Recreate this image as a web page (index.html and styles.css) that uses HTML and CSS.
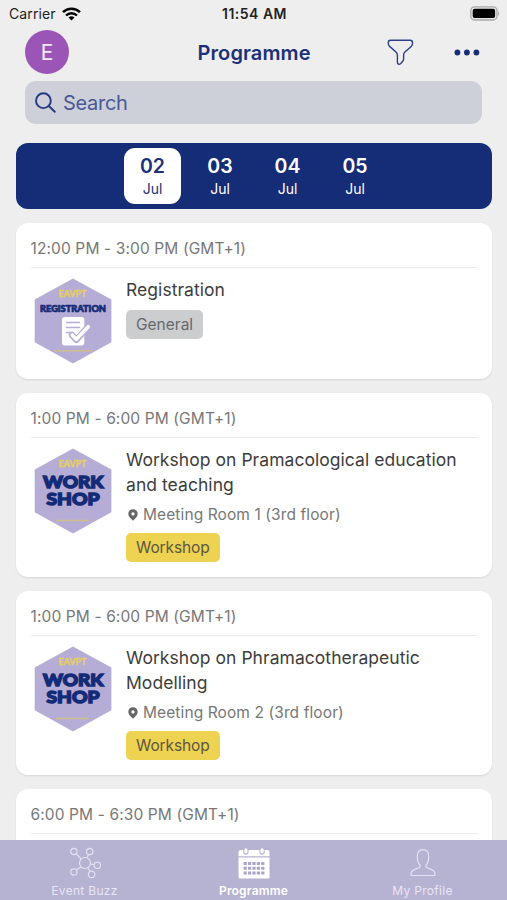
FILE: index.html
```html
<!DOCTYPE html>
<html lang="en">
<head>
<meta charset="utf-8">
<meta name="viewport" content="width=device-width, initial-scale=1">
<title>Programme</title>
<link rel="stylesheet" href="styles.css">
</head>
<body>
<div class="app">
  <div class="status">
    <div class="carrier"><span>Carrier</span>
      <svg width="19" height="14" viewBox="0 0 19 14"><path d="M1 5.200a12.200 12.200 0 0 1 17 0" fill="none" stroke="#000" stroke-width="2.500"/><path d="M4 8.500a8 8 0 0 1 11 0" fill="none" stroke="#000" stroke-width="2.400"/><path d="M9.500 13.500 6.500 10.600a4.400 4.400 0 0 1 6 0Z"/></svg>
    </div>
    <div class="clock">11:54 AM</div>
    <svg class="battery" width="32" height="15" viewBox="0 0 32 15"><rect x="2.800" y=".8" width="26.200" height="13.200" rx="3.800" fill="#e6e6e6" stroke="#a9a9a9" stroke-width="1.300"/><rect x="4.700" y="2.700" width="22.400" height="9.400" rx="2"/><path d="M30.200 4.900q2.200 2.500 0 5Z" fill="#a9a9a9"/></svg>
  </div>
  <header class="header">
    <div class="avatar">E</div>
    <h1>Programme</h1>
    <svg class="filter" width="27" height="27" viewBox="0 0 27 27"><path d="M3.400 1.200H23.300Q25.500 1.200 25.500 3.500V4.600Q25.500 6.200 24.200 7.400L17.900 13Q16.600 14.200 16.600 16V20Q16.600 21.300 15.700 22.200L13.800 24.500Q12.500 25.700 11.500 25.200 10.400 24.700 10.400 23.200V16Q10.400 14.300 9 13L2.600 7.400Q1.300 6.200 1.300 4.600V3.500Q1.300 1.200 3.400 1.200Z"/></svg>
    <svg class="more" width="26" height="7" viewBox="0 0 26 7"><circle cx="3.400" cy="3.500" r="2.900"/><circle cx="12.900" cy="3.500" r="2.900"/><circle cx="22.400" cy="3.500" r="2.900"/></svg>
  </header>
  <div class="search">
    <svg width="22" height="22" viewBox="0 0 22 22"><circle cx="8.400" cy="8.700" r="7.400"/><path d="m13.800 14 6 5.800"/></svg>
    <span>Search</span>
  </div>
  <nav class="dates">
    <div class="date active"><b>02</b><span>Jul</span></div>
    <div class="date"><b>03</b><span>Jul</span></div>
    <div class="date"><b>04</b><span>Jul</span></div>
    <div class="date"><b>05</b><span>Jul</span></div>
  </nav>
  <main class="list">
    <article class="card short">
      <div class="time"><span>12:00 PM - 3:00 PM (GMT+1)</span></div>
      <div class="body">
        <svg class="badge" viewBox="0 0 78 86">
          <path class="hex" d="M39 .4 77.400 21.400V64.300L39 85.600.7 64.300V21.400Z"/>
          <text class="eavpt" x="24.500" y="19.300" textLength="28" lengthAdjust="spacingAndGlyphs">EAVPT</text>
          <text class="reg" x="6" y="33.600" textLength="66" lengthAdjust="spacingAndGlyphs">REGISTRATION</text>
          <rect x="28" y="39" width="22.300" height="28.500" rx="3" fill="#fff"/>
          <path d="M32.500 44.600H45.500M32.500 49.500H45.500M32.500 54.400H36.500" fill="none" stroke="#b6add7" stroke-width="1.500" stroke-linecap="round"/>
          <path d="m38 57 4.300 4.800L54.300 48.700" fill="none" stroke="#b6add7" stroke-width="6.400" stroke-linecap="round" stroke-linejoin="round"/>
          <path d="m38.200 57 4.100 4.300L54.200 48.700" fill="none" stroke="#fff" stroke-width="3.600" stroke-linecap="round" stroke-linejoin="round"/>
          <path class="rule" d="M20 72.800H58"/>
        </svg>
        <div class="info"><h2>Registration</h2><span class="tag grey">General</span></div>
      </div>
    </article>
    <article class="card">
      <div class="time"><span>1:00 PM - 6:00 PM (GMT+1)</span></div>
      <div class="body">
        <svg class="badge" viewBox="0 0 78 86">
          <path class="hex" d="M39 .4 77.400 21.400V64.300L39 85.600.7 64.300V21.400Z"/>
          <text class="eavpt" x="24.500" y="19.300" textLength="28" lengthAdjust="spacingAndGlyphs">EAVPT</text>
          <text class="big" x="9" y="40" textLength="60.500" lengthAdjust="spacingAndGlyphs">WORK</text>
          <text class="big" x="12.500" y="56.600" textLength="53" lengthAdjust="spacingAndGlyphs">SHOP</text>
          <path class="rule" d="M22 72.500H55"/>
        </svg>
        <div class="info"><h2>Workshop on Pramacological education<br>and teaching</h2>
          <p class="place"><svg width="10" height="12" viewBox="0 0 10 12"><path fill="currentColor" fill-rule="evenodd" d="M5 .3C2.200.3.3 2.300.3 4.900.3 7.600 3.200 9.800 5 11.800 6.800 9.800 9.700 7.600 9.700 4.900 9.700 2.300 7.800.3 5 .3ZM5 3.300a1.600 1.600 0 1 1 0 3.200 1.600 1.600 0 0 1 0-3.200Z"/></svg><span>Meeting Room 1 (3rd floor)</span></p>
          <span class="tag">Workshop</span></div>
      </div>
    </article>
    <article class="card">
      <div class="time"><span>1:00 PM - 6:00 PM (GMT+1)</span></div>
      <div class="body">
        <svg class="badge" viewBox="0 0 78 86">
          <path class="hex" d="M39 .4 77.400 21.400V64.300L39 85.600.7 64.300V21.400Z"/>
          <text class="eavpt" x="24.500" y="19.300" textLength="28" lengthAdjust="spacingAndGlyphs">EAVPT</text>
          <text class="big" x="9" y="40" textLength="60.500" lengthAdjust="spacingAndGlyphs">WORK</text>
          <text class="big" x="12.500" y="56.600" textLength="53" lengthAdjust="spacingAndGlyphs">SHOP</text>
          <path class="rule" d="M22 72.500H55"/>
        </svg>
        <div class="info"><h2>Workshop on Phramacotherapeutic<br>Modelling</h2>
          <p class="place"><svg width="10" height="12" viewBox="0 0 10 12"><path fill="currentColor" fill-rule="evenodd" d="M5 .3C2.200.3.3 2.300.3 4.900.3 7.600 3.200 9.800 5 11.800 6.800 9.800 9.700 7.600 9.700 4.900 9.700 2.300 7.800.3 5 .3ZM5 3.300a1.600 1.600 0 1 1 0 3.200 1.600 1.600 0 0 1 0-3.200Z"/></svg><span>Meeting Room 2 (3rd floor)</span></p>
          <span class="tag">Workshop</span></div>
      </div>
    </article>
    <article class="card">
      <div class="time"><span>6:00 PM - 6:30 PM (GMT+1)</span></div>
    </article>
  </main>
  <footer class="tabs">
    <div class="tab">
      <svg class="line" width="32" height="32" viewBox="0 0 32 32"><circle cx="16" cy="16" r="5.500"/><circle cx="4.900" cy="4.500" r="3.200"/><circle cx="20.700" cy="4.500" r="3.200"/><circle cx="28.300" cy="18.300" r="3.200"/><circle cx="4.900" cy="25" r="3.200"/><circle cx="22.600" cy="27.400" r="3.200"/><path d="m7.200 6.800 5 5.200M19.600 7.500 18 10.800M21.500 17l3.600.7M12.200 20l-5 2.800M18.800 20.800l2.300 3.800"/></svg>
      <span>Event Buzz</span>
    </div>
    <div class="tab current">
      <svg width="32" height="32" viewBox="0 0 32 32"><path fill="#fff" d="M.5 5Q.5 3 2.500 3H29.500Q31.500 3 31.500 5V9.200H.5ZM.5 10.400H31.500V30Q31.500 31.500 30 31.500H2Q.5 31.500.5 30Z"/><g fill="#fff" stroke="#b6b2d2" stroke-width="1.100"><rect x="5.800" y=".7" width="4.200" height="6.400" rx="2.100"/><rect x="22" y=".7" width="4.200" height="6.400" rx="2.100"/></g><path d="M5.600 16.500H26.400M5.600 21.200H26.400M5.600 25.900H26.400" fill="none" stroke="#aaa5cb" stroke-width="3" stroke-dasharray="3.200 1.200"/></svg>
      <span>Programme</span>
    </div>
    <div class="tab">
      <svg class="line" width="32" height="32" viewBox="0 0 32 32"><path d="M4 28.500V27C4 24 6.500 22.900 9 21.900L12 20.800Q13.300 20.200 13.200 18.500C11 16.500 10.300 14 10.300 9.500 10.300 5.200 12.500 2.700 16 2.700S21.700 5.200 21.700 9.500C21.700 14 21 16.500 18.800 18.500Q18.700 20.200 20 20.800L23 21.900C25.500 22.900 28 24 28 27V28.500Z"/></svg>
      <span>My Profile</span>
    </div>
  </footer>
</div>
</body>
</html>
```

FILE: styles.css
```css
* { box-sizing: border-box; }
body { margin: 0; background: #eee; font-family: Inter, "Liberation Sans", sans-serif; }
h1, h2, p { margin: 0; }
.app { width: 507px; height: 900px; display: flex; flex-direction: column; overflow: hidden; }
svg { display: block; flex: none; }

.status { height: 27px; padding: 0 7px 0 9px; display: grid; grid-template-columns: 1fr auto 1fr; align-items: center; font-size: 14px; color: #222; }
.carrier { display: flex; align-items: center; gap: 6px; letter-spacing: .1px; }
.clock { font-weight: 600; letter-spacing: .5px; }
.battery { justify-self: end; margin-top: -1px; }

.header { height: 50px; padding: 0 27px 0 25px; display: grid; grid-template-columns: 172.500px 115px 74px 27px 1fr; align-items: center; }
.avatar { width: 44px; height: 44px; border-radius: 50%; background: #9b55b7; color: #f6e9fb; display: flex; align-items: center; justify-content: center; font-size: 21px; }
h1 { font-size: 20px; line-height: 26px; font-weight: 600; color: #1c3079; white-space: nowrap; letter-spacing: .1px; padding-top: 1px; }
.filter { grid-column: 4; fill: none; stroke: #2a3f88; stroke-width: 1.400; }
.more { justify-self: end; fill: #172d78; }

.search { flex: none; margin: 4px 25px 0; height: 43px; border-radius: 11px; background: #cdd0d9; display: flex; align-items: center; gap: 6px; padding-left: 10px; color: #4b5896; font-size: 20px; letter-spacing: -.3px; }
.search svg { fill: none; stroke: #243984; stroke-width: 1.900; stroke-linecap: round; }

.dates { flex: none; margin: 18.500px 15px 0 15.500px; height: 66px; border-radius: 12px; background: #152c76; display: flex; justify-content: center; gap: 11px; padding: 5px 0; color: #fff; }
.date { width: 56.500px; height: 56px; border-radius: 11px; display: flex; flex-direction: column; align-items: center; padding-top: 5px; }
.date b { font-size: 19.500px; line-height: 26px; font-weight: 600; }
.date span { font-size: 14px; line-height: 19px; }
.date.active { background: #fff; color: #1c3079; }

.list { flex: 1; min-height: 0; overflow: hidden; padding: 14.500px 15px 0 15.500px; display: flex; flex-direction: column; gap: 14.500px; }
.card { flex: none; height: 183.700px; padding: 0 14.500px 0 15px; border-radius: 12px; background: #fff; box-shadow: 0 1px 2px rgba(0,0,0,.1); }
.card.short { height: 155.500px; }
.time { height: 45px; padding-top: 6.500px; border-bottom: 1px solid #ececec; display: flex; align-items: center; font-size: 15.500px; letter-spacing: .12px; color: #777; white-space: nowrap; }
.body { display: flex; padding: 10px 0 0 3.500px; gap: 14px; }
.badge { width: 78px; height: 86px; }
.hex { fill: #b6add7; }
.eavpt { font: 900 10px Lato, sans-serif; fill: #e6cd63; stroke: #e6cd63; stroke-width: .3; }
.big { font: 900 17.500px Lato, sans-serif; fill: #142c78; stroke: #142c78; stroke-width: 1.500; }
.reg { font: 900 8.500px Lato, sans-serif; fill: #142c78; stroke: #142c78; stroke-width: .7; }
.rule { stroke: #d6bf7d; stroke-width: 1.400; stroke-dasharray: 2.500 .5; }
.info { display: flex; flex-direction: column; align-items: flex-start; }
h2 { font-size: 17.500px; line-height: 24.500px; font-weight: 400; letter-spacing: .05px; color: #3d3d3d; white-space: nowrap; }
.place { display: flex; align-items: center; gap: 5px; height: 29px; margin-top: 3px; padding-left: 2px; font-size: 15.500px; letter-spacing: .1px; color: #777; white-space: nowrap; }
.place svg { color: #666; }
.tag { height: 29px; margin-top: 4.300px; padding: 0 10px; border-radius: 5px; background: #eed252; color: #5c5640; font-size: 15.500px; letter-spacing: -.1px; line-height: 29px; white-space: nowrap; }
.tag.grey { background: #cbcdcf; color: #66686b; margin-top: 7px; letter-spacing: 0; }

.tabs { flex: none; height: 60px; background: #b6b2d2; display: grid; grid-template-columns: 169px 169px 169px; color: #e8e5f6; font-size: 12px; letter-spacing: .3px; }
.tab { display: flex; flex-direction: column; align-items: center; padding-top: 7px; }
.tab span { line-height: 16px; margin-top: 4px; white-space: nowrap; }
.tab.current { color: #fff; font-weight: 600; letter-spacing: .2px; }
.line { fill: none; stroke: #e4e0f3; stroke-width: 1.200; }
```
